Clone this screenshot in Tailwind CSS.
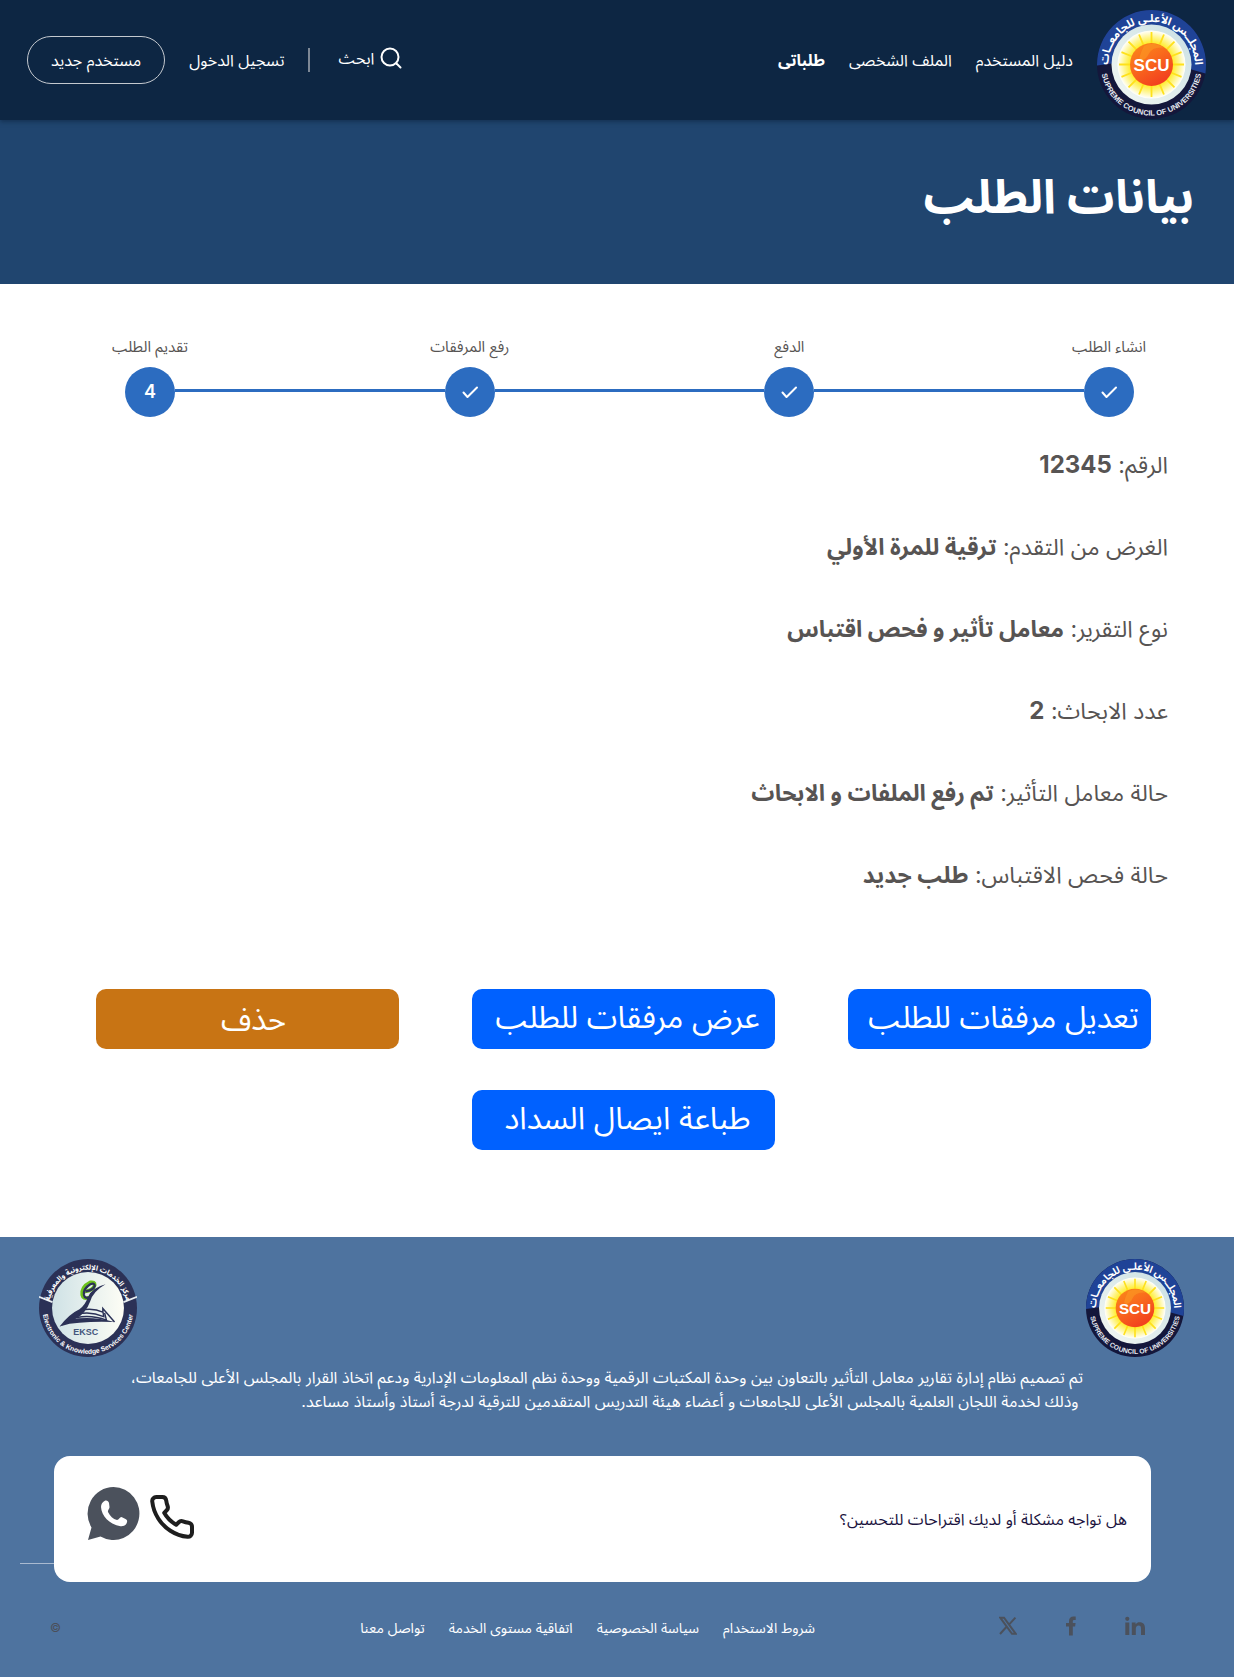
<!DOCTYPE html>
<html lang="ar" dir="rtl">
<head>
<meta charset="utf-8">
<meta name="viewport" content="width=device-width, initial-scale=1">
<title>بيانات الطلب</title>
<script src="https://cdn.jsdelivr.net/npm/@tailwindcss/browser@4"></script>
</head>
<body class="flex min-h-screen flex-col bg-white font-[Inter,'Noto_Sans_Arabic','Noto_Sans',sans-serif] text-base">

<svg class="absolute size-0" aria-hidden="true">
  <defs>
    <radialGradient id="sunGlow"><stop offset=".6" stop-color="#ffec1f"/><stop offset=".8" stop-color="#fff58a"/><stop offset="1" stop-color="#ffffff"/></radialGradient>
    <linearGradient id="sunBody" x1="0" y1="0" x2=".6" y2="1"><stop offset="0" stop-color="#fb8c1a"/><stop offset=".5" stop-color="#f96a1c"/><stop offset="1" stop-color="#f2401f"/></linearGradient>
    <linearGradient id="rim" x1="1" y1="0" x2="0" y2="1"><stop offset="0" stop-color="#c9dfe3"/><stop offset="1" stop-color="#f4f8f4"/></linearGradient>
    <linearGradient id="page" x1="0" y1="0" x2="1" y2="0"><stop offset="0" stop-color="#cfe2e6"/><stop offset="1" stop-color="#fdfdf5"/></linearGradient>
    <path id="arcTop" d="M11.500 62A43.500 43.500 0 1 1 97.500 62"/>
    <path id="arcBottom" d="M4.500 48A50.500 50.500 0 1 0 104.500 48"/>
    <symbol id="scu" viewBox="0 0 109 109">
      <circle cx="54.500" cy="54.500" r="54.500" fill="#14173b"/>
      <path d="M0 54.500a54.500 54.500 0 0 1 109 0q0 4-.5 9Q54 46 0 55.500Z" fill="#1f4397"/>
      <circle cx="54.500" cy="54.500" r="40" fill="url(#rim)"/>
      <circle cx="54.500" cy="54.500" r="34" fill="url(#sunGlow)"/>
      <g stroke="#ffe11a" stroke-width="1.800">
        <path id="ray" d="M54.500 33V22M54.500 76v11M33 54.500H22M76 54.500h11"/>
        <use href="#ray" transform="rotate(22.500 54.500 54.500)"/>
        <use href="#ray" transform="rotate(45 54.500 54.500)"/>
        <use href="#ray" transform="rotate(67.500 54.500 54.500)"/>
      </g>
      <circle cx="54.500" cy="54.500" r="21.500" fill="url(#sunBody)"/>
      <path d="M47 36q8-4 16-.5l4 2q-12-1-15 6-4 8-8 6-4 1 3-13.500Z" fill="#fb9a24" opacity=".6"/>
      <text x="54.500" y="61" text-anchor="middle" direction="ltr" font-family="'Liberation Sans Narrow','Liberation Sans',sans-serif" font-weight="700" font-size="17" fill="#fff">SCU</text>
      <text text-anchor="middle" font-family="'Noto Sans Arabic','Noto Sans',sans-serif" font-weight="700" font-size="11" fill="#fff"><textPath href="#arcTop" startOffset="50%">المجلــس الأعلـى للجامعــات</textPath></text>
      <text text-anchor="middle" direction="ltr" font-family="'Liberation Sans Narrow','Liberation Sans',sans-serif" font-weight="700" font-size="7.500" fill="#e8ebf2"><textPath href="#arcBottom" startOffset="50%">SUPREME COUNCIL OF UNIVERSITIES</textPath></text>
    </symbol>
    <symbol id="eksc" viewBox="0 0 109 109">
      <circle cx="54.500" cy="54.500" r="54.500" fill="#2b3156"/>
      <path d="M0 42l15 6M109 42l-15 6" stroke="#e8eef2" stroke-width="2"/>
      <circle cx="54.500" cy="54.500" r="40" fill="url(#page)"/>
      <path d="M51 36q9-1 11-7 0-4-5-3-10 5-9 14 1 5 7 3" fill="none" stroke="#6cc21a" stroke-width="4"/>
      <path d="M52 36q8-1 10-6 0-4-5-2-8 5-7 12 1 5 7 2" fill="none" stroke="#2b3156" stroke-width="2.500"/>
      <path d="M74 28Q60 36 57 47 52 61 40 67L23 75Q34 61 45 56 52 50 54 43 58 32 74 28Z" fill="#2b3156"/>
      <path d="M23 75Q34 66 44 66 62 64 84 70 62 69 45 71Q34 71 23 75Z" fill="#2b3156"/>
      <path d="M46 57q14-3 25 2v-4l13 15M44 61q14-3 28 3l-1-6M42 65q17-3 33 3l-2-8" fill="none" stroke="#2b3156" stroke-width="1.600"/>
      <text x="52" y="85" text-anchor="middle" direction="ltr" font-family="'Liberation Sans',sans-serif" font-weight="700" font-size="10" fill="#44567c">EKSC</text>
      <text text-anchor="middle" font-family="'Noto Sans Arabic','Noto Sans',sans-serif" font-weight="700" font-size="8" fill="#fff"><textPath href="#arcTop" startOffset="50%">مركز الخدمات الإلكترونية والمعرفية</textPath></text>
      <text text-anchor="middle" direction="ltr" font-family="'Liberation Sans',sans-serif" font-weight="700" font-size="7.500" fill="#fff"><textPath href="#arcBottom" startOffset="50%">Electronic &amp; Knowledge Services Center</textPath></text>
    </symbol>
    <symbol id="check" viewBox="0 0 24 24"><path d="M5.500 12.500l4 4.500 9.500-9.500" fill="none" stroke="#fff" stroke-width="2" stroke-linecap="round" stroke-linejoin="round"/></symbol>
  </defs>
</svg>

<header class="relative flex h-[120px] items-center justify-between bg-[#0d2643] ps-7 pe-[27px] text-white shadow-[0_2px_4px_rgba(13,38,67,0.6)]">
  <div class="flex items-center gap-6">
    <a href="#" aria-label="المجلس الأعلى للجامعات"><svg class="mt-2 size-[109px]"><use href="#scu"/></svg></a>
    <nav class="flex items-center gap-6">
      <a href="#">دليل المستخدم</a>
      <a href="#">الملف الشخصى</a>
      <a href="#" class="font-bold">طلباتى</a>
    </nav>
  </div>
  <div class="flex items-center gap-6">
    <button type="button" class="me-1 mb-1 flex items-center gap-1.5">
      <svg class="size-[22px]" viewBox="0 0 22 22" fill="none" stroke="#fff" stroke-width="2" stroke-linecap="round"><circle cx="10" cy="10" r="8.500"/><path d="M16.500 16.500l4 4"/></svg>
      ابحث
    </button>
    <span class="h-6 w-0.5 bg-[#7d8896]"></span>
    <a href="#">تسجيل الدخول</a>
    <a href="#" class="flex h-12 items-center rounded-full border border-[#c4c9cf] px-[23px]">مستخدم جديد</a>
  </div>
</header>

<section class="flex h-[164px] items-center bg-[#20456f] px-10 pb-3">
  <h1 class="text-[47px] font-bold text-white">بيانات الطلب</h1>
</section>

<main class="flex-1 text-[#575453]">
  <ol class="flex items-start ps-[100px] pe-[125px] pt-[50px] text-[15px]">
    <li class="flex w-[50px] flex-col items-center gap-2"><span class="whitespace-nowrap leading-[25px]">انشاء الطلب</span><span class="flex size-[50px] items-center justify-center rounded-full bg-[#2c6cc0]"><svg class="size-6"><use href="#check"/></svg></span></li>
    <li class="mt-[55px] h-[3px] flex-1 bg-[#2c6cc0]" aria-hidden="true"></li>
    <li class="flex w-[50px] flex-col items-center gap-2"><span class="whitespace-nowrap leading-[25px]">الدفع</span><span class="flex size-[50px] items-center justify-center rounded-full bg-[#2c6cc0]"><svg class="size-6"><use href="#check"/></svg></span></li>
    <li class="mt-[55px] h-[3px] flex-1 bg-[#2c6cc0]" aria-hidden="true"></li>
    <li class="flex w-[50px] flex-col items-center gap-2"><span class="whitespace-nowrap leading-[25px]">رفع المرفقات</span><span class="flex size-[50px] items-center justify-center rounded-full bg-[#2c6cc0]"><svg class="size-6"><use href="#check"/></svg></span></li>
    <li class="mt-[55px] h-[3px] flex-1 bg-[#2c6cc0]" aria-hidden="true"></li>
    <li class="flex w-[50px] flex-col items-center gap-2"><span class="whitespace-nowrap leading-[25px]">تقديم الطلب</span><span class="flex size-[50px] items-center justify-center rounded-full bg-[#2c6cc0] text-lg font-semibold text-white">4</span></li>
  </ol>

  <div class="flex flex-col gap-[42px] px-[66px] pt-7 text-[23px] leading-10">
    <p>الرقم: <b class="text-2xl leading-10">12345</b></p>
    <p>الغرض من التقدم: <b>ترقية للمرة الأولي</b></p>
    <p>نوع التقرير: <b>معامل تأثير و فحص اقتباس</b></p>
    <p>عدد الابحاث: <b class="text-2xl leading-10">2</b></p>
    <p>حالة معامل التأثير: <b>تم رفع الملفات و الابحاث</b></p>
    <p>حالة فحص الاقتباس: <b>طلب جديد</b></p>
  </div>

  <div class="grid grid-cols-3 gap-x-[73px] gap-y-[41px] ps-[83px] pe-24 pt-[94px] pb-[87px] text-[31px] text-white">
    <button type="button" class="h-[60px] rounded-[10px] bg-[#0061ff] pe-2 pb-1 whitespace-nowrap">تعديل مرفقات للطلب</button>
    <button type="button" class="h-[60px] rounded-[10px] bg-[#0061ff] pe-2 pb-1 whitespace-nowrap">عرض مرفقات للطلب</button>
    <button type="button" class="h-[60px] rounded-[10px] bg-[#c87414] ps-0 pe-3 whitespace-nowrap">حذف</button>
    <button type="button" class="col-start-2 h-[60px] rounded-[10px] bg-[#0061ff] pe-2 pb-1 whitespace-nowrap">طباعة ايصال السداد</button>
  </div>
</main>

<footer class="bg-[#4e739f] pt-[22px] text-white">
  <div class="flex justify-between ps-[50px] pe-[39px]">
    <svg class="size-[98px]" role="img" aria-label="SCU"><use href="#scu"/></svg>
    <svg class="size-[98px]" role="img" aria-label="EKSC"><use href="#eksc"/></svg>
  </div>
  <p class="ps-[151px] pt-2 leading-6">تم تصميم نظام إدارة تقارير معامل التأثير بالتعاون بين وحدة المكتبات الرقمية ووحدة نظم المعلومات الإدارية ودعم اتخاذ القرار بالمجلس الأعلى للجامعات،<br>&nbsp;وذلك لخدمة اللجان العلمية بالمجلس الأعلى للجامعات و أعضاء هيئة التدريس المتقدمين للترقية لدرجة أستاذ وأستاذ مساعد.</p>
  <div class="relative mt-[43px] ps-[83px] pe-[54px]">
    <span class="absolute bottom-[18px] left-5 h-px w-[34px] bg-[#a9bad0]"></span>
    <div class="flex h-[126px] items-center justify-between rounded-2xl bg-white ps-6 pe-[33px] text-[#1c1440]">
      <p>هل تواجه مشكلة أو لديك اقتراحات للتحسين؟</p>
      <div class="flex items-center gap-2">
        <a href="#" aria-label="اتصال"><svg class="mb-1 size-12" viewBox="0 0 24 24" fill="none" stroke="#1e1e1e" stroke-width="2" stroke-linecap="round" stroke-linejoin="round"><path d="M22 16.920v3a2 2 0 0 1-2.180 2 19.790 19.790 0 0 1-8.630-3.070 19.500 19.500 0 0 1-6-6 19.790 19.790 0 0 1-3.070-8.670A2 2 0 0 1 4.110 2h3a2 2 0 0 1 2 1.720 12.840 12.840 0 0 0 .7 2.810 2 2 0 0 1-.45 2.110L8.090 9.910a16 16 0 0 0 6 6l1.270-1.270a2 2 0 0 1 2.110-.45 12.840 12.840 0 0 0 2.810.7A2 2 0 0 1 22 16.920z"/></svg></a>
        <a href="#" aria-label="واتساب"><svg class="mb-3 h-[53px] w-[53px]" viewBox="0 0 52 53"><path d="M26 0a26 26.500 0 1 1-13 49.500L.500 53 4 40.500A26 26.500 0 0 1 26 0Z" fill="#4b515c"/><path d="M17 14c2-1 4 0 4.500 2l.5 4c.2 2-2 3-1.500 5 2 4 5 7 9 8 2 0 2.500-3 4.500-3l4 2c2 1 2 2.500 1 4.500-1.500 2.500-4 3-7 2.500C22 37 14 29 13.500 20c0-3 1.500-5 3.500-6Z" fill="#fff"/></svg></a>
      </div>
    </div>
  </div>
  <div class="flex h-[95px] items-center ps-[89px] pe-[50px] pb-1">
    <div class="mb-1 flex items-center gap-[42px]">
      <a href="#" aria-label="LinkedIn"><svg class="size-5" viewBox="0 0 20 20" fill="#4b515c"><circle cx="2.300" cy="2.800" r="2.100"/><path d="M.300 6.500h4V19h-4zM6.800 6.500h3.800v1.800c1-1.500 2.300-2.100 4-2.100 3.800 0 5.400 2.200 5.400 6V19h-4v-6.300c0-2-.6-3.100-2.300-3.100-2 0-2.900 1.300-2.900 3.300V19h-4z"/></svg></a>
      <a href="#" aria-label="Facebook"><svg class="h-5 w-6" viewBox="0 0 24 20" fill="#4b515c"><path d="M10 19.500v-9H7V7h3V5.200C10 2 11.700.500 14.500.500h2.200v3.400H15.200c-1 0-1.400.5-1.400 1.500V7h2.800l-.5 3.500h-2.300v9z"/></svg></a>
      <a href="#" aria-label="X"><svg class="h-5 w-[18px]" viewBox="0 0 18 20"><path d="M1.200 1.700h3.800l11.800 16.100h-3.800ZM1 18l6.600-7.200M10.200 8.400 16.400 1.600" fill="none" stroke="#4b515c" stroke-width="2"/></svg></a>
    </div>
    <nav class="ms-[184px] flex gap-6 text-sm">
      <a href="#">شروط الاستخدام</a>
      <a href="#">سياسة الخصوصية</a>
      <a href="#">اتفاقية مستوى الخدمة</a>
      <a href="#">تواصل معنا</a>
    </nav>
    <span class="ms-auto text-xs text-[#4b4f58]">©</span>
  </div>
</footer>
</body>
</html>
